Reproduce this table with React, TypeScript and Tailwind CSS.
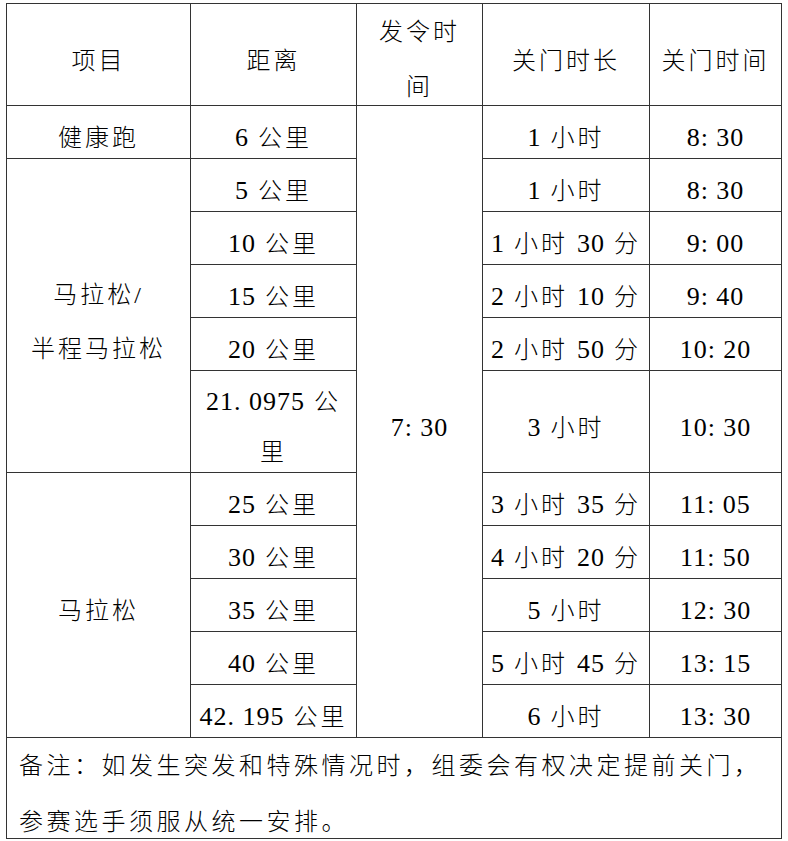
import React from 'react';

type Row = {
  dist: React.ReactNode;
  dur: React.ReactNode;
  close: React.ReactNode;
  tall?: boolean;
};

// numbers are drawn a bit taller and tighter, like the narrow Latin digits of the source
const N: React.FC<{ children: React.ReactNode }> = ({ children }) => (
  <span className="text-[26px] tracking-[1px]">{children}</span>
);

const rows: Row[] = [
  { dist: <><N>6</N> 公里</>, dur: <><N>1</N> 小时</>, close: <N>8: 30</N> },
  { dist: <><N>5</N> 公里</>, dur: <><N>1</N> 小时</>, close: <N>8: 30</N> },
  { dist: <><N>10</N> 公里</>, dur: <><N>1</N> 小时 <N>30</N> 分</>, close: <N>9: 00</N> },
  { dist: <><N>15</N> 公里</>, dur: <><N>2</N> 小时 <N>10</N> 分</>, close: <N>9: 40</N> },
  { dist: <><N>20</N> 公里</>, dur: <><N>2</N> 小时 <N>50</N> 分</>, close: <N>10: 20</N> },
  {
    dist: (
      <div className="h-[100px] flex flex-col justify-center pt-[10px] leading-[50px]">
        <div>
          <N>21. 0975</N> 公
        </div>
        <div>里</div>
      </div>
    ),
    dur: <><N>3</N> 小时</>,
    close: <N>10: 30</N>,
    tall: true,
  },
  { dist: <><N>25</N> 公里</>, dur: <><N>3</N> 小时 <N>35</N> 分</>, close: <N>11: 05</N> },
  { dist: <><N>30</N> 公里</>, dur: <><N>4</N> 小时 <N>20</N> 分</>, close: <N>11: 50</N> },
  { dist: <><N>35</N> 公里</>, dur: <><N>5</N> 小时</>, close: <N>12: 30</N> },
  { dist: <><N>40</N> 公里</>, dur: <><N>5</N> 小时 <N>45</N> 分</>, close: <N>13: 15</N> },
  { dist: <><N>42. 195</N> 公里</>, dur: <><N>6</N> 小时</>, close: <N>13: 30</N> },
];

const cell = 'border border-[#333] text-center align-middle p-0 pt-[12px]';

const App: React.FC = () => {
  return (
    <div
      className="bg-white w-[788px] h-[841px] pt-[3px] pl-[6px] text-[24px] leading-[36px] tracking-[3px] text-black font-light"
      style={{ fontFamily: '"Liberation Serif", "Noto Sans CJK SC", serif' }}
    >
      <table className="table-fixed border-collapse w-[775px]">
        <colgroup>
          <col className="w-[184px]" />
          <col className="w-[166px]" />
          <col className="w-[126px]" />
          <col className="w-[167px]" />
          <col className="w-[132px]" />
        </colgroup>
        <tbody>
          {/* Header */}
          <tr className="h-[102px]">
            <td className={cell}>项目</td>
            <td className={cell}>距离</td>
            <td className="border border-[#333] text-center align-middle p-0">
              <div className="h-[100px] flex flex-col justify-center pt-[11px] leading-[55px]">
                <div>发令时</div>
                <div>间</div>
              </div>
            </td>
            <td className={cell}>关门时长</td>
            <td className={cell}>关门时间</td>
          </tr>

          {rows.map((r, i) => (
            <tr key={i} className={r.tall ? 'h-[102px]' : 'h-[53px]'}>
              {i === 0 && <td className={cell}>健康跑</td>}
              {i === 1 && (
                <td rowSpan={5} className={`${cell} leading-[54px]`}>
                  马拉松/<br />半程马拉松
                </td>
              )}
              {i === 6 && (
                <td rowSpan={5} className={cell}>
                  马拉松
                </td>
              )}
              <td className={r.tall ? 'border border-[#333] text-center align-middle p-0' : cell}>{r.dist}</td>
              {i === 0 && (
                <td rowSpan={11} className={cell}>
                  <N>7: 30</N>
                </td>
              )}
              <td className={cell}>{r.dur}</td>
              <td className={cell}>{r.close}</td>
            </tr>
          ))}

          {/* Note */}
          <tr className="h-[101px]">
            <td colSpan={5} className="border border-[#333] text-left align-top p-0 pl-[12px]">
              <div className="h-[99px] leading-[56px] tracking-[3.5px]">
                备注：如发生突发和特殊情况时，组委会有权决定提前关门，
                <br />
                参赛选手须服从统一安排。
              </div>
            </td>
          </tr>
        </tbody>
      </table>
    </div>
  );
};

export default App;
